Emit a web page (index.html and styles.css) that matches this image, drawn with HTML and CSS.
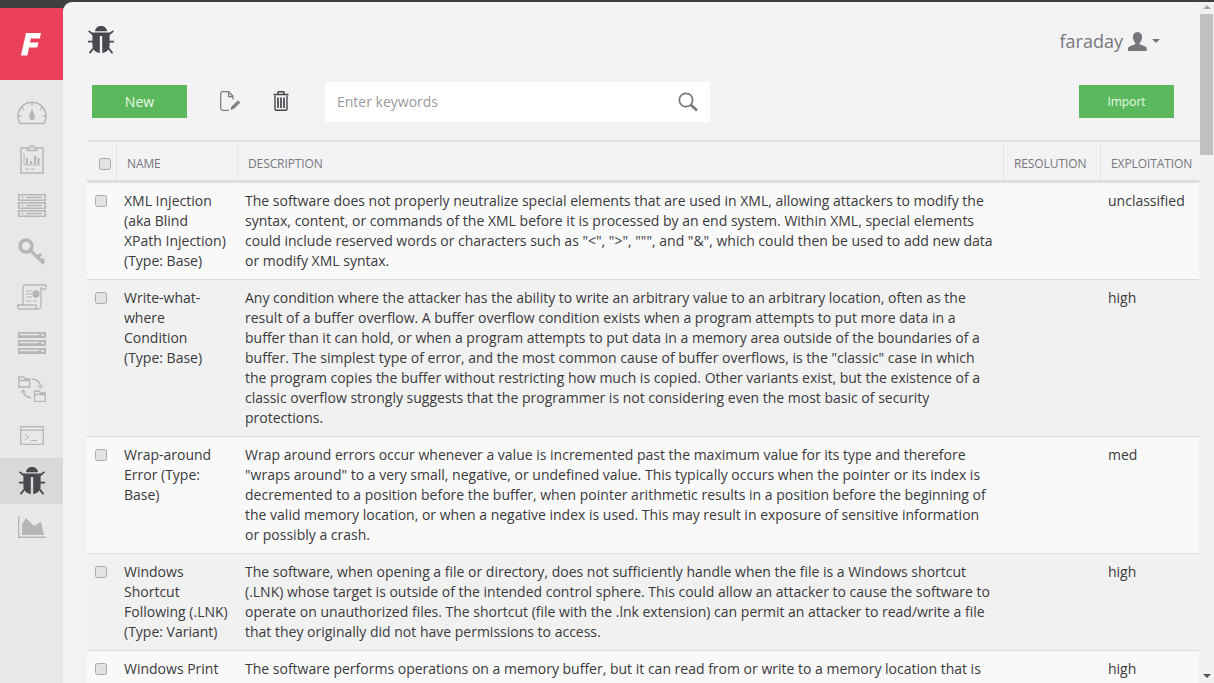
FILE: index.html
```html
<!DOCTYPE html>
<html lang="en">
<head>
<meta charset="utf-8">
<title>Faraday - Vulnerability templates</title>
<link rel="stylesheet" href="styles.css">
</head>
<body>
<svg class="defs" width="0" height="0" aria-hidden="true">
  <symbol id="bug" viewBox="0 0 26 28">
    <path d="M7 5.200C7.200 2 9.800 0 13 0s5.800 2 6 5.200z"/>
    <path d="M4.400 6.400h17.200V19c0 4.800-3.500 7.700-7.400 7.900V10h-2.400v16.900C7.900 26.700 4.400 23.800 4.400 19z"/>
    <path d="M1.200 5.400l3.600 2.800M24.800 5.400l-3.600 2.800M.4 15.700h4.200M25.600 15.700h-4.200M2 26.600l3.400-4.300M24 26.600l-3.400-4.300" fill="none" stroke="currentColor" stroke-width="1.800" stroke-linecap="round"/>
  </symbol>
</svg>
<div class="app">
  <nav class="sidebar">
    <div class="topstrip"></div>
    <a class="logo"><svg width="20" height="25" viewBox="0 0 20 25"><path d="M5 1h15l-1.200 5.500H9.800l-.8 4h8.500l-1.200 5H8l-1.600 8H0z" fill="#fff"/></svg></a>
    <a class="nav-item"><svg width="30" height="24" viewBox="0 0 30 24" fill="none" stroke="currentColor" stroke-width="1.500"><path d="M3 22.500C1.500 20 1 18 1 15.500 1 7.500 7.300 1.200 15 1.200S29 7.500 29 15.500c0 2.500-.5 4.500-2 7z"/><path d="M15 1.500v3M5 7l2 2M25 7l-2 2M1.500 15h3M28.500 15h-3"/><path d="M15 9.500c1 3 2.200 4.800 2.200 6.500a2.200 2.200 0 0 1-4.400 0c0-1.700 1.200-3.500 2.200-6.500z" fill="currentColor"/></svg></a>
    <a class="nav-item"><svg width="24" height="30" viewBox="0 0 24 30" fill="none" stroke="currentColor" stroke-width="1.500"><path d="M7 4H1v25h22V4h-6"/><path d="M7 6.500V4h3c0-3 4-3 4 0h3v2.500z"/><path d="M4 9v12h16" stroke-width="1"/><path d="M7 20v-6M11 20v-3M15 20v-8M18.500 20v-6" stroke-width="2.200"/><path d="M5 25h4M11 25h4" stroke-width="1"/></svg></a>
    <a class="nav-item"><svg width="28" height="23" viewBox="0 0 28 23"><path d="M0 0h28v7H0zM0 8h28v7H0zM0 16h28v7H0z" fill="currentColor"/><path d="M1.500 1.500h25v4h-25zM1.500 9.500h25v4h-25zM1.500 17.500h25v4h-25z" fill="#e8e7e9"/><path d="M8 3.500h16M8 11.500h16M8 19.500h16" stroke="currentColor" stroke-width="1.500"/><circle cx="4.500" cy="3.500" r="1" fill="currentColor"/><circle cx="4.500" cy="11.500" r="1" fill="currentColor"/><circle cx="4.500" cy="19.500" r="1" fill="currentColor"/></svg></a>
    <a class="nav-item"><svg width="28" height="27" viewBox="0 0 28 27" fill="none" stroke="currentColor"><circle cx="8" cy="8" r="6" stroke-width="3.400"/><path d="M12.500 12.500L26 25.500M19.500 19.500l3.500-3.500M23.500 23.500l2.500-2.500" stroke-width="3.200"/></svg></a>
    <a class="nav-item"><svg width="30" height="26" viewBox="0 0 30 26" fill="none" stroke="currentColor" stroke-width="1.300"><path d="M6 21V3c0-1 .7-2 2-2h20c1 0 1.500 1 1 2l-.5 2H24"/><path d="M24 3v18c0 2-1 4-3 4H3c-1.500 0-2.500-1-2.500-2.500V21H19v1c0 1 1 3 2.500 3"/><path d="M9 7h6M9 10h6M9 13h6M9 17h5M16 17h4" stroke-width="1"/><circle cx="19" cy="10" r="3" fill="currentColor"/></svg></a>
    <a class="nav-item"><svg width="28" height="22" viewBox="0 0 28 22"><path d="M0 0h28v6H0zM0 8h28v6H0zM0 16h28v6H0z" fill="currentColor"/><path d="M1.500 2.500h19M1.500 10.500h19M1.500 18.500h19" stroke="#e8e7e9" stroke-width="1.500"/><circle cx="24.500" cy="3" r="1.300" fill="#e8e7e9"/><circle cx="24.500" cy="11" r="1.300" fill="#e8e7e9"/><circle cx="24.500" cy="19" r="1.300" fill="#e8e7e9"/></svg></a>
    <a class="nav-item"><svg width="28" height="26" viewBox="0 0 28 26" fill="none" stroke="currentColor" stroke-width="1.300"><path d="M.7 1h5l1.500 2h4.500v8H.7zM.7 4.500h11M16.500 15h4.500l1.500 2h4.800v8.300H16.500zM16.500 18.500h10.800"/><path d="M14 3c4.500.2 8 3 8.600 7.500M5 15c.8 3.500 4 6.300 8 6.800"/><path d="M20 9.500l2.700 2.500 2.300-2.800M7.500 16.500L5 13.800 2.500 16.500" stroke-width="1.100"/></svg></a>
    <a class="nav-item"><svg width="24" height="19" viewBox="0 0 24 19" fill="none" stroke="currentColor" stroke-width="1.300"><path d="M.7.700h22.600v17.600H.7zM.7 4.200h22.600"/><path d="M5 8l3.500 3L5 14M11 14.500h6" stroke-width="1"/></svg></a>
    <a class="nav-item active"><svg class="bug-icon" width="26" height="28"><use href="#bug"/></svg></a>
    <a class="nav-item"><svg width="28" height="22" viewBox="0 0 28 22"><path d="M.7 0v21.300H28" fill="none" stroke="currentColor" stroke-width="1.400"/><path d="M4 19V8l4-6 8 8 7-4 3 13z" fill="currentColor"/></svg></a>
  </nav>
  <main class="main">
    <header class="head">
      <svg class="bug-icon" width="26" height="28"><use href="#bug"/></svg>
      <div class="user">faraday
        <svg width="19" height="19" viewBox="0 0 19 19"><path d="M9.500 0c3 0 4.600 2.200 4.600 5 0 2.400-1 4.600-2.300 5.600v1.600c2.300 1 7 2 7 4.300V19H0v-2.500c0-2.300 4.800-3.300 7.200-4.300v-1.600C5.900 9.600 4.900 7.400 4.900 5c0-2.800 1.600-5 4.600-5z" fill="currentColor"/></svg>
        <span class="caret"></span>
      </div>
    </header>
    <div class="toolbar">
      <button class="btn">New</button>
      <svg class="tool-edit" width="21" height="20" viewBox="0 0 21 20" fill="none" stroke="#808084" stroke-width="1.300"><path d="M13 8.500V5L8.700.7H2.500C1.300.7.700 1.500.7 2.500v15c0 1 .6 1.800 1.800 1.800h6.500M8.500 1v4.500H13"/><path d="M10.500 19l.8-3.200L18 9.200l2.400 2.300-6.700 6.600z" fill="#808084" stroke="none"/></svg>
      <svg class="tool-trash" width="16" height="20" viewBox="0 0 16 20" fill="none" stroke="#46464a" stroke-width="1.300"><path d="M5 3V1.300c0-.4.300-.6.600-.6h4.800c.3 0 .6.200.6.600V3M.5 3.500h15" stroke-width="1.500"/><path d="M2 4.500V18c0 .8.500 1.300 1.200 1.300h9.600c.7 0 1.200-.5 1.200-1.300V4.500" stroke-width="1.400"/><path d="M5 6.500V17M8 6.500V17M11 6.500V17" stroke-width="1.700"/></svg>
      <div class="search">
        <span class="placeholder">Enter keywords</span>
        <svg width="20" height="20" viewBox="0 0 20 20" fill="none" stroke="#77777b"><circle cx="8" cy="8" r="6.700" stroke-width="1.700"/><path d="M13 13l6 5.500" stroke-width="2.600"/></svg>
      </div>
      <button class="btn btn-import">Import</button>
    </div>
    <table class="grid">
      <colgroup><col class="c-check"><col class="c-name"><col class="c-desc"><col class="c-res"><col class="c-exp"></colgroup>
      <thead>
        <tr><th class="check-head"><span class="box"></span></th><th>NAME</th><th>DESCRIPTION</th><th>RESOLUTION</th><th>EXPLOITATION</th></tr>
      </thead>
      <tbody>
        <tr><td class="check"><span class="box"></span></td><td>XML Injection (aka Blind XPath Injection) (Type: Base)</td><td>The software does not properly neutralize special elements that are used in XML, allowing attackers to modify the syntax, content, or commands of the XML before it is processed by an end system. Within XML, special elements could include reserved words or characters such as "&lt;", "&gt;", """, and "&amp;", which could then be used to add new data or modify XML syntax.</td><td></td><td>unclassified</td></tr>
        <tr><td class="check"><span class="box"></span></td><td>Write-what-where Condition (Type: Base)</td><td>Any condition where the attacker has the ability to write an arbitrary value to an arbitrary location, often as the result of a buffer overflow. A buffer overflow condition exists when a program attempts to put more data in a buffer than it can hold, or when a program attempts to put data in a memory area outside of the boundaries of a buffer. The simplest type of error, and the most common cause of buffer overflows, is the "classic" case in which the program copies the buffer without restricting how much is copied. Other variants exist, but the existence of a classic overflow strongly suggests that the programmer is not considering even the most basic of security protections.</td><td></td><td>high</td></tr>
        <tr><td class="check"><span class="box"></span></td><td>Wrap-around Error (Type: Base)</td><td>Wrap around errors occur whenever a value is incremented past the maximum value for its type and therefore "wraps around" to a very small, negative, or undefined value. This typically occurs when the pointer or its index is decremented to a position before the buffer, when pointer arithmetic results in a position before the beginning of the valid memory location, or when a negative index is used. This may result in exposure of sensitive information or possibly a crash.</td><td></td><td>med</td></tr>
        <tr><td class="check"><span class="box"></span></td><td>Windows Shortcut Following (.LNK) (Type: Variant)</td><td>The software, when opening a file or directory, does not sufficiently handle when the file is a Windows shortcut (.LNK) whose target is outside of the intended control sphere. This could allow an attacker to cause the software to operate on unauthorized files. The shortcut (file with the .lnk extension) can permit an attacker to read/write a file that they originally did not have permissions to access.</td><td></td><td>high</td></tr>
        <tr><td class="check"><span class="box"></span></td><td>Windows Print Spooler (Type: Base)</td><td>The software performs operations on a memory buffer, but it can read from or write to a memory location that is outside of the intended boundary of the buffer.</td><td></td><td>high</td></tr>
      </tbody>
    </table>
  </main>
  <div class="scrollbar">
    <span class="arrow-up"></span>
    <span class="thumb"></span>
    <span class="arrow-down"></span>
  </div>
</div>
</body>
</html>
```
FILE: styles.css
```css
* { box-sizing: border-box; }
html, body { margin: 0; height: 100%; overflow: hidden; }
body { font-family: "Open Sans", sans-serif; font-size: 14px; line-height: 20px; color: #333; background: #3f3f41; }
.defs { display: block; width: 0; height: 0; }
.app { display: flex; height: 683px; overflow: hidden; }
.sidebar { width: 63px; flex: none; background: #e8e7e9; display: flex; flex-direction: column; }
.topstrip { height: 8px; background: #3f3f41; flex: none; }
.logo { height: 72px; margin-bottom: 10px; background: #ea4059; display: flex; align-items: center; justify-content: center; flex: none; padding-right: 1px; }
.nav-item { height: 46px; flex: none; display: flex; align-items: center; justify-content: center; color: #b6b6b8; }
.nav-item.active { background: #d9d9da; color: #48494e; }
.bug-icon { fill: currentColor; color: #48494e; }
.main { flex: 1; margin-top: 2px; background: #f3f2f5; border-top-left-radius: 9px; overflow: hidden; min-width: 0; }
.head { height: 80px; display: flex; justify-content: space-between; padding: 24px 39px 0 25px; }
.user { font-size: 18px; line-height: 28px; color: #77777b; display: flex; align-items: center; gap: 5px; height: 28px; margin-top: 1px; }
.caret { width: 0; height: 0; border: 4px solid transparent; border-top-color: #77777b; border-bottom: 0; }
.toolbar { height: 58px; padding: 0 25px 0 29px; display: flex; align-items: flex-start; }
.btn { width: 95px; height: 33px; margin-top: 3px; border: 0; border-radius: 0; padding: 0; background: #5cb85c; color: #e8fbe8; font: 14px/33px "Open Sans", sans-serif; flex: none; }
.btn-import { margin-left: auto; font-size: 12px; }
.tool-edit { margin: 9px 0 0 33px; flex: none; }
.tool-trash { margin: 9px 0 0 32px; flex: none; }
.search { width: 385px; height: 40px; margin-left: 36px; background: #fff; display: flex; align-items: center; justify-content: space-between; padding: 0 12px; color: #9a9a9d; flex: none; }
.placeholder { font-size: 14px; }
.grid { width: 1112px; margin-left: 24px; border-collapse: separate; border-spacing: 0; table-layout: fixed; }
.c-check { width: 30px; }
.c-name { width: 121px; }
.c-desc { width: 766px; }
.c-res { width: 97px; }
.c-exp { width: 98px; }
th { height: 43px; padding: 5px 10px 0; border-top: 2px solid #e2e1e5; border-bottom: 3px solid #dddcdf; border-right: 1px solid #e6e5e8; text-align: left; font-weight: 400; font-size: 12px; letter-spacing: -.1px; color: #77777b; white-space: nowrap; overflow: hidden; }
th:last-child { border-right: 0; }
th.check-head { padding: 5px 0 0 12px; }
td { padding: 8px 9px 8px 7px; vertical-align: top; border-bottom: 1px solid #ddd; color: #3a3a3c; }
tbody tr:nth-child(odd) td { background: #f9f9f9; }
tbody tr:nth-child(even) td { background: #f1f1f1; }
td.check { padding: 12px 0 0 8px; }
.box { display: block; width: 12px; height: 12px; background: #e3e3e3; border: 1px solid #a9a9a9; border-radius: 2.500px; }
.scrollbar { width: 15px; flex: none; background: #f1f1f1; display: flex; flex-direction: column; align-items: center; margin-top: 2px; }
.arrow-up { width: 0; height: 0; margin-top: 3px; border: 4px solid transparent; border-bottom: 4px solid #a3a3a3; border-top: 0; flex: none; }
.thumb { width: 13px; height: 141px; margin-top: 5px; background: #c1c1c1; flex: none; }
.arrow-down { width: 0; height: 0; margin-top: auto; margin-bottom: 5px; border: 4px solid transparent; border-top: 4px solid #505050; border-bottom: 0; flex: none; }
```
